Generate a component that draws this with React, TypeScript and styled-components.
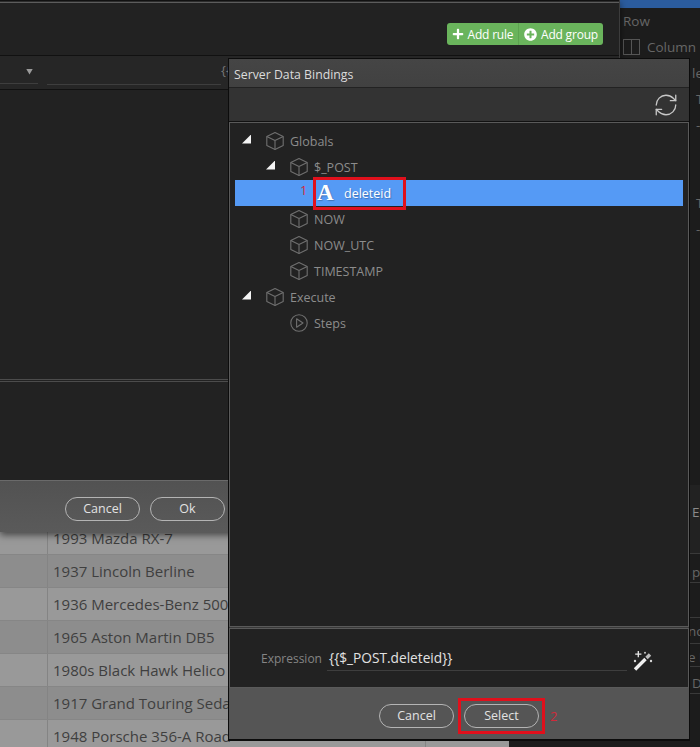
import React from 'react';
import styled, { createGlobalStyle } from 'styled-components';
import { FaPlus, FaPlusCircle } from 'react-icons/fa';
import { RefreshCw } from 'lucide-react';

const GlobalStyle = createGlobalStyle`
  html, body {
    margin: 0;
    padding: 0;
    background: #1c1c1c;
  }
  body {
    font-family: "Open Sans", "Noto Sans", sans-serif;
    overflow: hidden;
  }
`;

const Page = styled.div`
  position: relative;
  width: 700px;
  height: 747px;
  overflow: hidden;
  display: grid;
  grid-template-columns: 620px 80px;
`;

const Main = styled.div`
  display: flex;
  flex-direction: column;
  min-width: 0;
`;

/* dialog behind the bindings picker */
const BackDialog = styled.div`
  position: relative;
  z-index: 1;
  height: 532px;
  flex: none;
  display: flex;
  flex-direction: column;
  background: #222;
  border-right: 1px solid #3c3c3c;
  box-shadow: 0 3px 7px rgba(0, 0, 0, 0.55);
`;

const TopStrip = styled.div`
  height: 1px;
  flex: none;
  background: #2c2c2c;
  border-top: 1px solid #111;
  border-bottom: 1px solid #5c5c5c;
`;

const RuleBar = styled.div`
  height: 53px;
  flex: none;
  box-sizing: border-box;
  display: flex;
  justify-content: flex-end;
  align-items: flex-start;
  padding: 20px 16px 0 0;
  border-bottom: 1px solid #111;
`;

const GreenGroup = styled.div`
  display: flex;
  height: 22px;
  border-radius: 3px;
  overflow: hidden;
  background: #6ab45c;
`;

const GreenButton = styled.div<{ $width: number }>`
  width: ${(p) => p.$width}px;
  box-sizing: border-box;
  display: flex;
  align-items: center;
  justify-content: center;
  gap: 4px;
  color: #fff;
  font-size: 12px;
  letter-spacing: -0.2px;
  & + & {
    border-left: 1px solid #5da350;
  }
`;

const FilterBar = styled.div`
  height: 34px;
  flex: none;
  box-sizing: border-box;
  display: flex;
  background: #262626;
  border-bottom: 1px solid #111;
`;

const SelectLine = styled.div`
  width: 38px;
  height: 28px;
  border-bottom: 1px solid #3e3e3e;
  display: flex;
  align-items: center;
  justify-content: flex-end;
  padding-right: 4px;
  box-sizing: border-box;
  padding-top: 4px;
`;

const SelectArrow = styled.div`
  width: 7px;
  height: 6px;
  margin-right: 1px;
  background: #9a9a9a;
  clip-path: polygon(0 0, 100% 0, 50% 100%);
`;

const InputLine = styled.div`
  width: 174px;
  height: 28px;
  margin-left: 9px;
  border-bottom: 1px solid #3e3e3e;
`;

const Braces = styled.div`
  color: #777;
  font-size: 13px;
  line-height: 16px;
  padding-top: 6px;
  white-space: nowrap;
`;

const RulesArea = styled.div`
  flex: 1;
  border-bottom: 1px solid #4c4c4c;
`;

const NotesArea = styled.div`
  height: 98px;
  flex: none;
  border-top: 1px solid #4c4c4c;
  margin-top: 1px;
`;

const BackFooter = styled.div`
  height: 52px;
  flex: none;
  box-sizing: border-box;
  display: flex;
  justify-content: flex-end;
  align-items: flex-start;
  gap: 10px;
  padding: 16px 394px 0 0;
  background: linear-gradient(#525252, #5a5a5a);
  border-top: 1px solid #6a6a6a;
`;

const PillButton = styled.div`
  width: 75px;
  height: 24px;
  box-sizing: border-box;
  border: 1px solid #b4b4b4;
  border-radius: 12px;
  color: #e2e2e2;
  font-size: 12.5px;
  line-height: 22px;
  text-align: center;
  flex: none;
`;

/* grid showing through below the dialog */
const Table = styled.div`
  width: 509px;
  margin-top: -10px;
  flex: 1;
  overflow: hidden;
`;

const Row = styled.div<{ $dark: boolean }>`
  height: 33px;
  box-sizing: border-box;
  display: grid;
  grid-template-columns: 48px 377px 84px;
  background: ${(p) => (p.$dark ? '#8d8d8d' : '#999')};
  border-bottom: 1px solid #868686;
`;

const IdCell = styled.div`
  border-right: 1px solid #848484;
`;

const NameCell = styled.div`
  padding-left: 5px;
  color: #3f3f3f;
  font-size: 15px;
  line-height: 32px;
  white-space: nowrap;
  overflow: hidden;
`;

const EndCell = styled.div`
  border-left: 1px solid #848484;
`;

/* properties panel at the right */
const SidePanel = styled.div`
  display: flex;
  flex-direction: column;
  background: #1c1c1c;
  color: #666;
  font-size: 13.5px;
  overflow: hidden;
`;

const SelectedStrip = styled.div`
  height: 8px;
  flex: none;
  background: #2b5c9e;
`;

const SideLabel = styled.div<{ $height: number; $left: number; $line?: boolean; $shade?: boolean; $drop?: number }>`
  height: ${(p) => p.$height}px;
  flex: none;
  box-sizing: border-box;
  padding-left: ${(p) => p.$left}px;
  padding-top: ${(p) => Math.max(p.$drop ?? 0, 0)}px;
  padding-bottom: ${(p) => Math.max(-(p.$drop ?? 0), 0)}px;
  display: flex;
  align-items: center;
  gap: 7px;
  white-space: nowrap;
  ${(p) => (p.$line ? 'border-bottom: 1px solid #3a3a3a;' : '')}
  ${(p) => (p.$shade ? 'background: #222; color: #8a8a8a;' : '')}
`;

const ColumnIcon = styled.div`
  width: 17px;
  height: 16px;
  box-sizing: border-box;
  border: 1px solid #555;
  flex: none;
  background: linear-gradient(#555, #555) center / 1px 100% no-repeat;
`;

/* server data bindings picker */
const Modal = styled.div`
  position: absolute;
  z-index: 2;
  left: 228px;
  top: 58px;
  width: 462px;
  height: 683px;
  box-sizing: border-box;
  display: flex;
  flex-direction: column;
  background: #3a3a3a;
  border: 1px solid #0c0c0c;
  border-bottom-width: 2px;
`;

const ModalHeader = styled.div`
  height: 29px;
  flex: none;
  box-sizing: border-box;
  padding-left: 5px;
  background: linear-gradient(#454545, #414141);
  border-bottom: 1px solid #222;
  color: #dcdcdc;
  font-size: 12.3px;
  line-height: 31px;
`;

const ModalToolbar = styled.div`
  height: 34px;
  flex: none;
  box-sizing: border-box;
  display: flex;
  justify-content: flex-end;
  align-items: center;
  padding-right: 10px;
  background: #333;
  color: #c8c8c8;
  border-bottom: 1px solid #111;
`;

const TreePanel = styled.div`
  flex: 1;
  box-sizing: border-box;
  padding: 5px 5px 0 5px;
  background: #222;
  border: 1px solid #5a5a5a;
`;

const TreeRow = styled.div<{ $selected?: boolean }>`
  position: relative;
  height: 26px;
  display: flex;
  align-items: center;
  color: ${(p) => (p.$selected ? '#fff' : '#8c8c8c')};
  background: ${(p) => (p.$selected ? '#559af5' : 'transparent')};
  text-shadow: ${(p) => (p.$selected ? '1px 1px 1px rgba(0, 0, 0, 0.25)' : 'none')};
  font-size: 12.5px;
`;

const Twist = styled.div<{ $depth: number }>`
  width: 9px;
  height: 9px;
  flex: none;
  margin-left: ${(p) => 7 + p.$depth * 24}px;
  margin-right: 15px;
  margin-top: -4px;
  background: #f4f4f4;
  clip-path: polygon(100% 0, 100% 100%, 0 100%);
`;

const NoTwist = styled.div<{ $depth: number }>`
  width: ${(p) => 31 + p.$depth * 24}px;
  flex: none;
`;

const NodeIcon = styled.svg`
  width: 18px;
  height: 18px;
  flex: none;
  margin-right: 6px;
  fill: none;
  stroke: #6f6f6f;
  stroke-width: 1.1;
  stroke-linejoin: round;
`;

const TypeGlyph = styled.div`
  width: 27px;
  flex: none;
  margin-left: 3px;
  font-family: "Liberation Serif", serif;
  font-weight: 700;
  font-size: 23px;
  line-height: 26px;
  color: #fff;
`;

const StepMark = styled.div`
  position: absolute;
  color: #d02a3a;
  font-size: 13px;
  line-height: 14px;
  text-shadow: none;
`;

const RowMark = styled(StepMark)`
  left: 65px;
  top: 3px;
`;

const RedBox = styled.div`
  position: absolute;
  box-sizing: border-box;
  border: 3px solid #e0101c;
  pointer-events: none;
`;

const RowBox = styled(RedBox)`
  left: 78px;
  top: -3px;
  width: 93px;
  height: 33px;
`;

const ExpressionPanel = styled.div`
  height: 60px;
  flex: none;
  box-sizing: border-box;
  margin-top: 1px;
  display: flex;
  align-items: flex-start;
  padding: 19px 0 0 31px;
  background: #222;
  border: 1px solid #5a5a5a;
`;

const ExpressionLabel = styled.div`
  width: 66px;
  flex: none;
  color: #858585;
  font-size: 12px;
  line-height: 22px;
`;

const ExpressionInput = styled.div`
  width: 300px;
  height: 23px;
  flex: none;
  padding-left: 2px;
  box-sizing: border-box;
  color: #e2e2e2;
  font-size: 13.7px;
  line-height: 20px;
  border-bottom: 1px solid #3e3e3e;
`;

const WandIcon = styled.svg`
  width: 20px;
  height: 20px;
  flex: none;
  margin-left: 6px;
  margin-top: 3px;
`;

const ModalFooter = styled.div`
  height: 51px;
  flex: none;
  box-sizing: border-box;
  display: flex;
  justify-content: center;
  gap: 10px;
  padding: 16px 0 0 0;
  background: #555;
`;

const SelectSlot = styled.div`
  position: relative;
  display: flex;
`;

const SelectBox = styled(RedBox)`
  left: -6px;
  top: -6px;
  width: 87px;
  height: 36px;
`;

const SelectMark = styled(StepMark)`
  left: 86px;
  top: 5px;
`;

const CubeIcon = () => (
  <NodeIcon viewBox="0 0 18 18">
    <path d="M9 .6 17.2 4.6V13.4L9 17.4 .8 13.4V4.6Z" />
    <path d="M.8 4.6 9 8.6 17.2 4.6M9 8.6V17.4" />
  </NodeIcon>
);

const PlayIcon = () => (
  <NodeIcon viewBox="0 0 18 18">
    <circle cx="9" cy="9" r="8.2" />
    <path d="M6.6 4.8 13 9 6.6 13.2Z" />
  </NodeIcon>
);

const Wand = () => (
  <WandIcon viewBox="0 0 20 20">
    <path d="M2 18.5 12.5 8" stroke="#f0f0f0" strokeWidth="3.4" />
    <path d="M13.5 7 17 3.5" stroke="#bdbdbd" strokeWidth="3.4" />
    <path d="M5.3 0v6.2M2.2 3.1h6.2" stroke="#e8e8e8" strokeWidth="1.3" />
    <circle cx="2" cy="10" r="1.2" fill="#d8d8d8" />
    <circle cx="18" cy="10" r="1.2" fill="#d8d8d8" />
    <circle cx="12" cy="1.7" r="1" fill="#c8c8c8" />
  </WandIcon>
);

const cars = [
  '1993 Mazda RX-7',
  '1937 Lincoln Berline',
  '1936 Mercedes-Benz 500',
  '1965 Aston Martin DB5',
  '1980s Black Hawk Helico',
  '1917 Grand Touring Seda',
  '1948 Porsche 356-A Road',
];

export default function App() {
  return (
    <Page>
      <GlobalStyle />
      <Main>
        <BackDialog>
          <TopStrip />
          <RuleBar>
            <GreenGroup>
              <GreenButton $width={71}>
                <FaPlus size={12} />
                Add rule
              </GreenButton>
              <GreenButton $width={85}>
                <FaPlusCircle size={13} />
                Add group
              </GreenButton>
            </GreenGroup>
          </RuleBar>
          <FilterBar>
            <SelectLine>
              <SelectArrow />
            </SelectLine>
            <InputLine />
            <Braces>{'{{'}</Braces>
          </FilterBar>
          <RulesArea />
          <NotesArea />
          <BackFooter>
            <PillButton>Cancel</PillButton>
            <PillButton>Ok</PillButton>
          </BackFooter>
        </BackDialog>
        <Table>
          {cars.map((car, i) => (
            <Row key={car} $dark={i % 2 === 1}>
              <IdCell />
              <NameCell>{car}</NameCell>
              <EndCell />
            </Row>
          ))}
        </Table>
      </Main>

      <SidePanel>
        <SelectedStrip />
        <SideLabel $height={26} $left={3}>Row</SideLabel>
        <SideLabel $height={26} $left={3}>
          <ColumnIcon />
          Column
        </SideLabel>
        <SideLabel $height={26} $left={72}>le</SideLabel>
        <SideLabel $height={26} $left={76}>T</SideLabel>
        <SideLabel $height={26} $left={76}>-</SideLabel>
        <SideLabel $height={52} $left={76} />
        <SideLabel $height={26} $left={76}>T</SideLabel>
        <SideLabel $height={26} $left={76}>-</SideLabel>
        <SideLabel $height={243} $left={72} />
        <SideLabel $height={69} $left={72} $line $shade $drop={-15}>E</SideLabel>
        <SideLabel $height={29} $left={72} $line $drop={8}>py</SideLabel>
        <SideLabel $height={35} $left={72} $line />
        <SideLabel $height={26} $left={68} $line>nc</SideLabel>
        <SideLabel $height={23} $left={68} $line $drop={4}>e D</SideLabel>
        <SideLabel $height={27} $left={72} $line $drop={5}>D</SideLabel>
      </SidePanel>

      <Modal>
        <ModalHeader>Server Data Bindings</ModalHeader>
        <ModalToolbar>
          <RefreshCw size={26} strokeWidth={1.2} />
        </ModalToolbar>
        <TreePanel>
          <TreeRow>
            <Twist $depth={0} />
            <CubeIcon />
            Globals
          </TreeRow>
          <TreeRow>
            <Twist $depth={1} />
            <CubeIcon />
            $_POST
          </TreeRow>
          <TreeRow $selected>
            <NoTwist $depth={2} />
            <TypeGlyph>A</TypeGlyph>
            deleteid
            <RowMark>1</RowMark>
            <RowBox />
          </TreeRow>
          <TreeRow>
            <NoTwist $depth={1} />
            <CubeIcon />
            NOW
          </TreeRow>
          <TreeRow>
            <NoTwist $depth={1} />
            <CubeIcon />
            NOW_UTC
          </TreeRow>
          <TreeRow>
            <NoTwist $depth={1} />
            <CubeIcon />
            TIMESTAMP
          </TreeRow>
          <TreeRow>
            <Twist $depth={0} />
            <CubeIcon />
            Execute
          </TreeRow>
          <TreeRow>
            <NoTwist $depth={1} />
            <PlayIcon />
            Steps
          </TreeRow>
        </TreePanel>
        <ExpressionPanel>
          <ExpressionLabel>Expression</ExpressionLabel>
          <ExpressionInput>{'{{$_POST.deleteid}}'}</ExpressionInput>
          <Wand />
        </ExpressionPanel>
        <ModalFooter>
          <PillButton>Cancel</PillButton>
          <SelectSlot>
            <PillButton>Select</PillButton>
            <SelectBox />
            <SelectMark>2</SelectMark>
          </SelectSlot>
        </ModalFooter>
      </Modal>
    </Page>
  );
}
